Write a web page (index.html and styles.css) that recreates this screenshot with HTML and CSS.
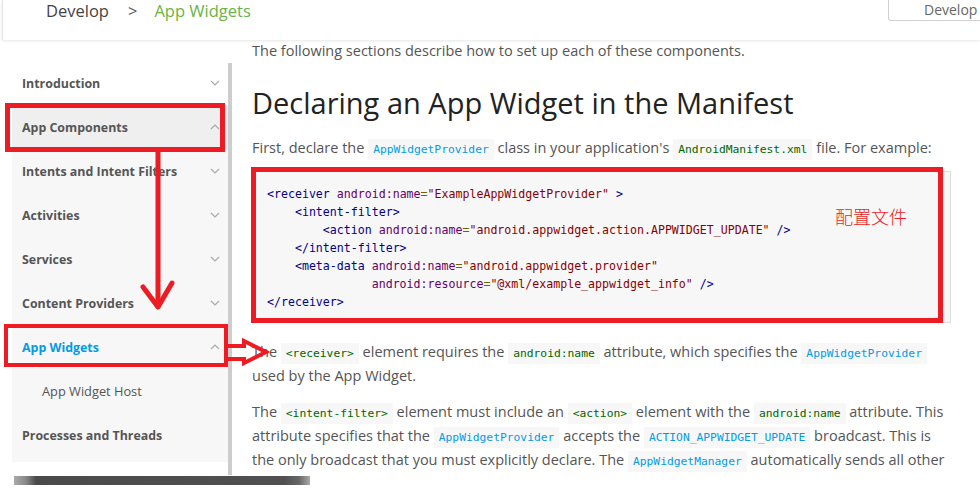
FILE: index.html
```html
<!DOCTYPE html>
<html>
<head>
<meta charset="utf-8">
<link rel="stylesheet" href="styles.css">
</head>
<body>
<header class="header">
  <div class="crumbs">
    <span class="crumb">Develop</span>
    <span class="sep">&gt;</span>
    <span class="crumb current">App Widgets</span>
  </div>
  <div class="site-nav">Develop</div>
</header>
<div class="page">
  <aside class="leftcol">
    <div class="navwrap">
      <nav class="sidebar">
        <div class="nav-item first"><span>Introduction</span><svg class="chev" viewBox="0 0 10 6"><polyline points="1,1 5,5 9,1"/></svg></div>
        <div class="nav-item active-parent"><span>App Components</span><svg class="chev" viewBox="0 0 10 6"><polyline points="1,5 5,1 9,5"/></svg></div>
        <div class="nav-item"><span>Intents and Intent Filters</span><svg class="chev" viewBox="0 0 10 6"><polyline points="1,1 5,5 9,1"/></svg></div>
        <div class="nav-item"><span>Activities</span><svg class="chev" viewBox="0 0 10 6"><polyline points="1,1 5,5 9,1"/></svg></div>
        <div class="nav-item"><span>Services</span><svg class="chev" viewBox="0 0 10 6"><polyline points="1,1 5,5 9,1"/></svg></div>
        <div class="nav-item"><span>Content Providers</span><svg class="chev" viewBox="0 0 10 6"><polyline points="1,1 5,5 9,1"/></svg></div>
        <div class="nav-item current"><span>App Widgets</span><svg class="chev" viewBox="0 0 10 6"><polyline points="1,5 5,1 9,5"/></svg></div>
        <div class="nav-item sub"><span>App Widget Host</span></div>
        <div class="nav-item"><span>Processes and Threads</span></div>
      </nav>
      <div class="scrollbar"></div>
    </div>
  </aside>
  <main class="content">
    <p class="lead">The following sections describe how to set up each of these components.</p>
    <h2 class="title">Declaring an App Widget in the Manifest</h2>
    <p class="para">First, declare the <code class="cls">AppWidgetProvider</code> class in your application's <code class="tag">AndroidManifest.xml</code> file. For example:</p>
    <pre class="code"><span class="t">&lt;receiver</span> <span class="a">android:name</span><span class="p">=</span><span class="v">"ExampleAppWidgetProvider"</span> <span class="t">&gt;</span>
    <span class="t">&lt;intent-filter&gt;</span>
        <span class="t">&lt;action</span> <span class="a">android:name</span><span class="p">=</span><span class="v">"android.appwidget.action.APPWIDGET_UPDATE"</span> <span class="t">/&gt;</span>
    <span class="t">&lt;/intent-filter&gt;</span>
    <span class="t">&lt;meta-data</span> <span class="a">android:name</span><span class="p">=</span><span class="v">"android.appwidget.provider"</span>
               <span class="a">android:resource</span><span class="p">=</span><span class="v">"@xml/example_appwidget_info"</span> <span class="t">/&gt;</span>
<span class="t">&lt;/receiver&gt;</span></pre>
    <p class="para after-code">The <code class="tag">&lt;receiver&gt;</code> element requires the <code class="tag">android:name</code> attribute, which specifies the <code class="cls">AppWidgetProvider</code><br>used by the App Widget.</p>
    <p class="para">The <code class="tag">&lt;intent-filter&gt;</code> element must include an <code class="tag">&lt;action&gt;</code> element with the <code class="tag">android:name</code> attribute. This<br>attribute specifies that the <code class="cls">AppWidgetProvider</code> accepts the <code class="cls">ACTION_APPWIDGET_UPDATE</code> broadcast. This is<br>the only broadcast that you must explicitly declare. The <code class="cls">AppWidgetManager</code> automatically sends all other</p>
  </main>
</div>

<div class="hbar"></div>
<div class="note">配置文件</div>
<svg class="annot" viewBox="0 0 980 504" width="980" height="504">
  <rect x="7.5" y="105.5" width="215" height="44" class="box5"/>
  <rect x="6" y="326" width="220" height="39" class="box4"/>
  <rect x="253.5" y="169.5" width="687" height="151" class="box5"/>
  <line x1="158" y1="150" x2="158" y2="306" class="ln"/>
  <polyline points="143,287 158,307 172,283" class="ln"/>
  <polygon points="226,346 244,346 244,341 266,352 244,363 244,359 226,359" class="ln4"/>
</svg>
</body>
</html>
```

FILE: styles.css
```css
html, body {
  margin: 0;
  padding: 0;
  background: #fff;
}
body {
  width: 980px;
  height: 504px;
  overflow: hidden;
  position: relative;
  font-family: "Open Sans", "Noto Sans", sans-serif;
  color: #555;
}

/* header */
.header {
  height: 40px;
  display: flex;
  align-items: flex-start;
  border-left: 1px solid #e4e4e4;
  margin-left: 2px;
  box-shadow: 0 1px 3px rgba(0,0,0,0.10);
  position: relative;
  z-index: 2;
  background: #fff;
}
.crumbs {
  margin-left: 43px;
  padding-top: 0;
  display: flex;
  font-size: 16.5px;
  line-height: 21px;
  color: #444;
}
.sep {
  margin: 0 17px 0 19px;
  color: #555;
}
.current.crumb { color: #6ab344; }
.site-nav {
  margin-left: auto;
  width: 92px;
  height: 22px;
  margin-top: -1px;
  border: 1px solid #d0d0d0;
  border-right: none;
  border-bottom-left-radius: 3px;
  box-sizing: border-box;
  padding-left: 35px;
  font-size: 14px;
  line-height: 20px;
  color: #666;
  white-space: nowrap;
  overflow: hidden;
}

/* layout */
.page {
  display: flex;
  align-items: flex-start;
}
.leftcol {
  width: 232px;
  flex: none;
  padding-top: 21px;
}
.navwrap {
  display: flex;
  align-items: flex-start;
}
.sidebar {
  margin-left: 12px;
  width: 216px;
  background: #f7f7f7;
  padding-bottom: 5px;
}
.scrollbar {
  width: 4px;
  height: 412px;
  margin-top: 2px;
  background: #cdcdcd;
}
.nav-item {
  height: 44px;
  display: flex;
  align-items: center;
  justify-content: space-between;
  padding: 0 8px 0 10px;
  font-size: 12.4px;
  font-weight: 700;
  color: #555;
}
.nav-item.first { background: #fff; }
.nav-item.active-parent { background: #efefef; }
.nav-item.current { color: #039be5; }
.nav-item.sub {
  font-weight: 400;
  font-size: 12.8px;
  padding-left: 30px;
}
.chev {
  width: 10px;
  height: 6px;
  fill: none;
  stroke: #aaa;
  stroke-width: 1.2;
}

/* content */
.content {
  padding-left: 20px;
  width: 699px;
  flex: none;
}
.lead {
  margin: 0;
  font-size: 14.5px;
  line-height: 22px;
}
.title {
  margin: 23px 0 0;
  font-size: 29px;
  line-height: 36px;
  font-weight: 400;
  color: #222;
}
.para {
  margin: 15px 0 0;
  font-size: 14.5px;
  line-height: 24px;
  white-space: nowrap;
}
.para + .para { margin-top: 12px; }
.after-code { margin-top: 17px; }
code {
  font-family: "DejaVu Sans Mono", monospace;
  font-size: 11.3px;
  line-height: 1;
  background: #f7f7f7;
  padding: 4px 5px;
  margin: 0;
}
code.tag { color: #006600; }
code.cls { color: #039be5; }
.code {
  margin: 11px 0 0;
  background: #f7f7f7;
  border: 1px solid #ddd;
  padding: 13px 14px 11px;
  font-family: "DejaVu Sans Mono", monospace;
  font-size: 11.6px;
  line-height: 18px;
  color: #000;
}
.t { color: #000088; }
.a { color: #660066; }
.p { color: #666600; }
.v { color: #880000; }

/* annotations */
.annot {
  position: absolute;
  left: 0;
  top: 0;
  pointer-events: none;
  z-index: 5;
}
.box5 { fill: none; stroke: #ed1c24; stroke-width: 5; }
.box4 { fill: none; stroke: #ed1c24; stroke-width: 4; }
.ln { fill: none; stroke: #ed1c24; stroke-width: 5; stroke-linejoin: round; stroke-linecap: round; }
.ln4 { fill: none; stroke: #ed1c24; stroke-width: 4; stroke-linejoin: miter; }
.note {
  position: absolute;
  left: 835px;
  top: 204px;
  font-family: "Noto Sans CJK SC", sans-serif;
  font-weight: 300;
  font-size: 18px;
  line-height: 24px;
  color: #ed1c24;
  z-index: 6;
}
.hbar {
  position: absolute;
  left: 14px;
  top: 476px;
  width: 296px;
  height: 9px;
  background: linear-gradient(to right, #aaa 0, #888 12px, #4a4a4a 22px, #505050 270px, #666 285px, #aaa 296px);
  filter: blur(0.6px);
}
```
